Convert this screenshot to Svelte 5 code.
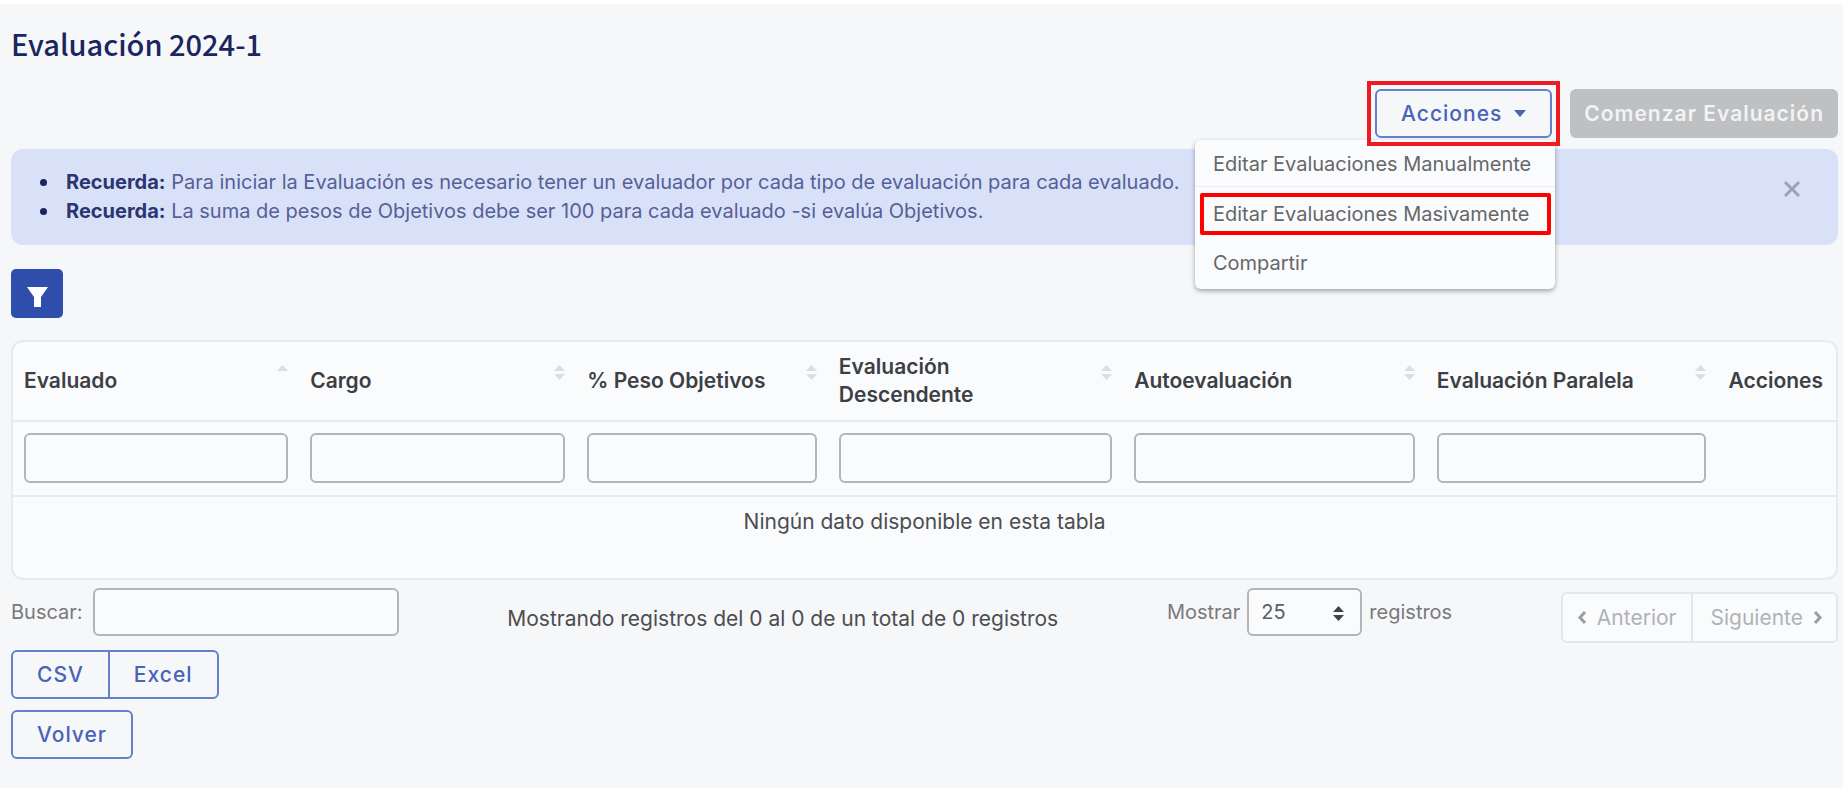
<script>
	let menuOpen = $state(true)
	let alertOpen = $state(true)
	let search = $state('')
	let pageSize = $state('25')

	const columns = [
		{ label: 'Evaluado', width: 15.7, sort: 'asc' },
		{ label: 'Cargo', width: 15.2, sort: 'both' },
		{ label: '% Peso Objetivos', width: 13.8, sort: 'both' },
		{ label: 'Evaluación Descendente', width: 16.2, sort: 'both' },
		{ label: 'Autoevaluación', width: 16.6, sort: 'both' },
		{ label: 'Evaluación Paralela', width: 16, sort: 'both' }
	]
</script>

<main>
	<h1>Evaluación 2024-1</h1>

	<div class="toolbar">
		<div class="dropdown">
			<button class="btn outline toggle" aria-expanded={menuOpen} onclick={() => (menuOpen = !menuOpen)}>
				Acciones
				<svg width="12" height="7" viewBox="0 0 12 7"><path d="M0 0h12L6 7z" fill="currentColor" /></svg>
			</button>
			{#if menuOpen}
				<ul class="menu">
					<li class="first"><a href="#manual">Editar Evaluaciones Manualmente</a></li>
					<li class="marked"><a href="#masivo">Editar Evaluaciones Masivamente</a></li>
					<li class="last"><a href="#compartir">Compartir</a></li>
				</ul>
			{/if}
		</div>
		<button class="btn start" disabled>Comenzar Evaluación</button>
	</div>

	{#if alertOpen}
		<div class="alert">
			<ul>
				<li>
					<strong>Recuerda:</strong> Para iniciar la Evaluación es necesario tener un evaluador por cada tipo de
					evaluación para cada evaluado.
				</li>
				<li><strong>Recuerda:</strong> La suma de pesos de Objetivos debe ser 100 para cada evaluado -si evalúa Objetivos.</li>
			</ul>
			<button class="close" aria-label="Cerrar" onclick={() => (alertOpen = false)}>
				<svg width="18" height="18" viewBox="0 0 18 18"
					><path d="M2 2l14 14M16 2L2 16" stroke="currentColor" stroke-width="3" /></svg
				>
			</button>
		</div>
	{/if}

	<button class="filter" aria-label="Filtrar">
		<svg width="21" height="20" viewBox="0 0 21 20"><path d="M0 0h21l-7 10v10H7V10z" fill="currentColor" /></svg>
	</button>

	<div class="card">
		<table>
			<colgroup>
				{#each columns as col}
					<col style="width: {col.width}%" />
				{/each}
				<col />
			</colgroup>
			<thead>
				<tr>
					{#each columns as col}
						<th>
							<button class="sort">
								<span>{col.label}</span>
								<svg width="11" height="15" viewBox="0 0 11 15" fill="currentColor">
									<path d="M5.5 0L11 6H0z" />
									{#if col.sort === 'both'}<path d="M5.5 15L11 9H0z" />{/if}
								</svg>
							</button>
						</th>
					{/each}
					<th>Acciones</th>
				</tr>
				<tr>
					{#each columns as col}
						<td><input type="text" aria-label={col.label} /></td>
					{/each}
					<td></td>
				</tr>
			</thead>
			<tbody>
				<tr>
					<td class="empty" colspan="7">Ningún dato disponible en esta tabla</td>
				</tr>
			</tbody>
		</table>
	</div>

	<div class="footer">
		<label class="search">Buscar: <input type="text" bind:value={search} /></label>
		<p>Mostrando registros del 0 al 0 de un total de 0 registros</p>
		<label class="length">
			Mostrar
			<span class="select">
				<select bind:value={pageSize}>
					<option>10</option>
					<option>25</option>
					<option>50</option>
				</select>
				<svg width="11" height="15" viewBox="0 0 11 15" fill="currentColor"><path d="M5.5 0L11 6H0zM5.5 15L11 9H0z" /></svg>
			</span>
			registros
		</label>
		<div class="pages">
			<button disabled>
				<svg width="9" height="13" viewBox="0 0 9 13"><path d="M7 1L2 6.5l5 5.5" /></svg>
				Anterior
			</button>
			<button disabled>
				Siguiente
				<svg width="9" height="13" viewBox="0 0 9 13"><path d="M2 1l5 5.5L2 12" /></svg>
			</button>
		</div>
	</div>

	<div class="exports">
		<button class="btn outline">CSV</button>
		<button class="btn outline">Excel</button>
	</div>
	<a class="btn outline" href="#volver">Volver</a>
</main>

<style>
	:global(body) {
		background: #f6f7f9;
	}
	main {
		border-top: 4px solid #fff;
		padding: 22px 5px 24px 11px;
		font-family: Inter, 'Liberation Sans', sans-serif;
		font-size: 20px;
		line-height: 28px;
		color: #4c4d50;
	}
	* {
		box-sizing: border-box;
	}
	button,
	input,
	select {
		font: inherit;
		color: inherit;
	}
	h1 {
		margin: 0 0 29px;
		font-family: 'Noto Sans CJK JP', 'Open Sans', sans-serif;
		font-size: 29px;
		line-height: 34px;
		font-weight: 500;
		color: #1b2560;
	}

	.btn {
		display: inline-flex;
		align-items: center;
		justify-content: center;
		height: 49px;
		padding: 0 24px;
		border: 2px solid transparent;
		border-radius: 6px;
		background: transparent;
		font-size: 21px;
		font-weight: 500;
		letter-spacing: 1px;
		text-decoration: none;
		white-space: nowrap;
	}
	.outline {
		border-color: #6480cb;
		color: #4863b8;
	}
	.toolbar {
		display: flex;
		justify-content: flex-end;
		gap: 18px;
		margin-bottom: 11px;
	}
	.dropdown {
		position: relative;
	}
	.toggle {
		position: relative;
		z-index: 3;
		gap: 12px;
	}
	.toggle::after {
		content: '';
		position: absolute;
		inset: -10px;
		border: 4px solid #ed1c24;
	}
	.start {
		padding: 0 12px;
		background: #bfc0c2;
		color: #f2f3f5;
		font-weight: 600;
	}
	.menu {
		position: absolute;
		z-index: 2;
		top: 51px;
		right: -3px;
		margin: 0;
		padding: 2px 0;
		list-style: none;
		border-radius: 6px;
		background: #fafbfd;
		box-shadow: 0 2px 5px rgba(0, 0, 0, 0.35);
		white-space: nowrap;
	}
	.menu a {
		display: block;
		color: #666769;
		text-decoration: none;
	}
	.first {
		padding: 8px 24px 8px 18px;
		border-bottom: 1px solid #f3eaec;
	}
	.marked {
		margin: 6px 4px 4px 5px;
		padding: 3px 9px;
		border: 4px solid #fe0000;
		border-radius: 2px;
	}
	.last {
		padding: 10px 18px;
	}

	.alert {
		display: flex;
		align-items: center;
		justify-content: space-between;
		padding: 19px 37px 19px 55px;
		border-radius: 12px;
		background: #d9e1f9;
		color: #565f96;
		line-height: 29px;
	}
	.alert ul {
		margin: 0;
		padding: 0;
		list-style: none;
	}
	.alert li {
		position: relative;
	}
	.alert li::before {
		content: '';
		position: absolute;
		top: 11px;
		left: -26px;
		width: 7px;
		height: 7px;
		border-radius: 50%;
		background: #1b2560;
	}
	.alert strong {
		font-weight: 700;
		color: #2b3570;
	}
	.close {
		display: flex;
		margin-bottom: 16px;
		padding: 0;
		border: 0;
		background: none;
		color: #9ca2b4;
	}

	.filter {
		display: flex;
		align-items: center;
		justify-content: center;
		width: 52px;
		height: 49px;
		margin: 24px 0 22px;
		padding: 6px 0 0;
		border: 0;
		border-radius: 5px;
		background: #2f4dab;
		color: #fff;
	}

	.card {
		border: 2px solid #e9eaec;
		border-radius: 12px;
		background: #fafbfd;
	}
	table {
		width: 100%;
		border-collapse: collapse;
		table-layout: fixed;
		font-size: 21px;
	}
	th,
	td {
		padding: 11px;
		text-align: left;
	}
	th {
		font-weight: 600;
		color: #3d3f43;
	}
	td {
		padding-bottom: 12px;
	}
	thead tr {
		border-bottom: 2px solid #e9eaec;
	}
	.sort {
		display: flex;
		align-items: center;
		justify-content: space-between;
		width: 100%;
		min-height: 56px;
		padding: 0;
		border: 0;
		background: none;
		text-align: left;
	}
	.sort span {
		max-width: 200px;
	}
	.sort svg {
		flex: none;
		align-self: flex-start;
		margin-top: 12px;
		color: #dcddde;
	}
	input,
	select {
		height: 48px;
		border: 2px solid #b4b5b7;
		border-radius: 6px;
		background: #fafbfd;
	}
	td input {
		display: block;
		width: 100%;
		height: 50px;
	}
	.empty {
		height: 82px;
		text-align: center;
		vertical-align: top;
	}

	.footer {
		display: flex;
		justify-content: space-between;
		align-items: flex-start;
		margin: 8px 0 7px;
	}
	.search,
	.length {
		display: flex;
		align-items: center;
		color: #78797b;
	}
	.search {
		gap: 10px;
	}
	.search input {
		width: 306px;
	}
	.length {
		gap: 7px;
	}
	.select {
		position: relative;
		display: flex;
	}
	select {
		width: 115px;
		padding: 0 12px;
		appearance: none;
		color: #5c5d60;
	}
	.select svg {
		position: absolute;
		top: 18px;
		right: 18px;
		color: #3f454b;
		pointer-events: none;
	}
	.footer p {
		margin: 17px 0 0;
		font-size: 21px;
	}
	.pages {
		display: flex;
		margin-top: 4px;
		border: 2px solid #e4e6ec;
		border-radius: 6px;
		background: #fafbfd;
		font-size: 21px;
	}
	.pages button {
		display: flex;
		align-items: center;
		gap: 10px;
		height: 47px;
		padding: 0 15px;
		border: 0;
		background: none;
		color: #b0b2b6;
	}
	.pages button + button {
		border-left: 2px solid #e4e6ec;
		padding: 0 14px 0 17px;
	}
	.pages path {
		fill: none;
		stroke: #9c9ea2;
		stroke-width: 3;
	}

	.exports {
		display: flex;
		margin-bottom: 11px;
	}
	.exports .btn:first-child {
		border-radius: 6px 0 0 6px;
	}
	.exports .btn + .btn {
		margin-left: -2px;
		border-radius: 0 6px 6px 0;
	}
</style>
